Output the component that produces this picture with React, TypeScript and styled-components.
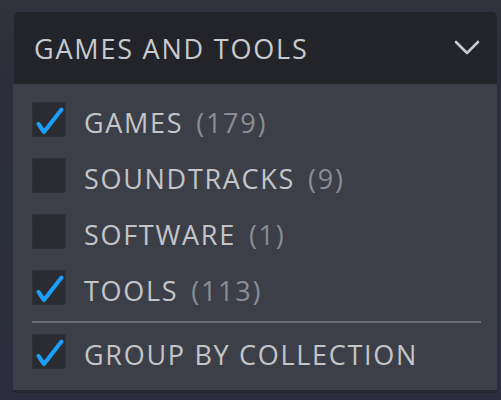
import React from 'react';
import styled, { createGlobalStyle } from 'styled-components';

const GlobalStyle = createGlobalStyle`
  html, body {
    margin: 0;
    padding: 0;
    background: #2a2c3a;
  }
  body {
    font-family: "Open Sans", "Noto Sans", sans-serif;
  }
`;

const Page = styled.div`
  width: 501px;
  height: 400px;
  overflow: hidden;
  display: flex;
  flex-direction: column;
  padding: 12px 4px 0 13px;
  box-sizing: border-box;
  background: linear-gradient(180deg, #30333c 0px, #2c2f3b 90px, #2b2d3c 100%);
`;

const Dropdown = styled.div`
  display: flex;
  flex-direction: column;
`;

const Header = styled.div`
  height: 72px;
  margin-left: 1px;
  display: flex;
  align-items: center;
  justify-content: space-between;
  padding: 0 17px 0 20px;
  background: #222429;
  border-radius: 5px 5px 0 0;
  color: #c8cace;
  font-size: 27px;
  letter-spacing: 1.8px;
`;

const Title = styled.span`
  padding-top: 1px;
`;

const Menu = styled.div`
  display: flex;
  flex-direction: column;
  padding: 7px 16px 11px 19px;
  background: #3c3f47;
  border-bottom: 3px solid #25272d;
`;

const Row = styled.label`
  height: 56px;
  display: flex;
  align-items: center;
  gap: 18px;
  font-size: 27px;
  letter-spacing: 1.7px;
  color: #c3c5c8;
`;

const Box = styled.span`
  width: 34px;
  height: 35px;
  flex: none;
  display: flex;
  align-items: center;
  justify-content: center;
  background: #2a2c32;
  border-radius: 3px;
  box-shadow: inset 0 0 0 1px #2f3137;
`;

const Label = styled.span`
  padding-top: 7px;
  white-space: nowrap;
`;

const Count = styled.span`
  color: #8a8d93;
  margin-left: 13px;
`;

const Divider = styled.div`
  height: 2px;
  margin: 6px 0 0 0;
  background: #696c72;
`;

const Check = () => (
  <svg width="34" height="35" viewBox="0 0 34 35">
    <path
      d="M6.5 22 L12 30 L29.5 7.5"
      fill="none"
      stroke="#1a9fff"
      strokeWidth="4"
      strokeLinecap="round"
      strokeLinejoin="round"
    />
  </svg>
);

const Chevron = () => (
  <svg width="26" height="16" viewBox="0 0 26 16">
    <path
      d="M2 2 L13 13 L24 2"
      fill="none"
      stroke="#c8cacd"
      strokeWidth="2.6"
      strokeLinecap="round"
      strokeLinejoin="round"
    />
  </svg>
);

const items = [
  { name: 'GAMES', count: 179, checked: true },
  { name: 'SOUNDTRACKS', count: 9, checked: false },
  { name: 'SOFTWARE', count: 1, checked: false },
  { name: 'TOOLS', count: 113, checked: true },
];

export default function App() {
  return (
    <>
      <GlobalStyle />
      <Page>
        <Dropdown>
          <Header>
            <Title>GAMES AND TOOLS</Title>
            <Chevron />
          </Header>
          <Menu>
            {items.map((it) => (
              <Row key={it.name}>
                <Box>{it.checked && <Check />}</Box>
                <Label>
                  {it.name}
                  <Count>({it.count})</Count>
                </Label>
              </Row>
            ))}
            <Divider />
            <Row>
              <Box>
                <Check />
              </Box>
              <Label>GROUP BY COLLECTION</Label>
            </Row>
          </Menu>
        </Dropdown>
      </Page>
    </>
  );
}
